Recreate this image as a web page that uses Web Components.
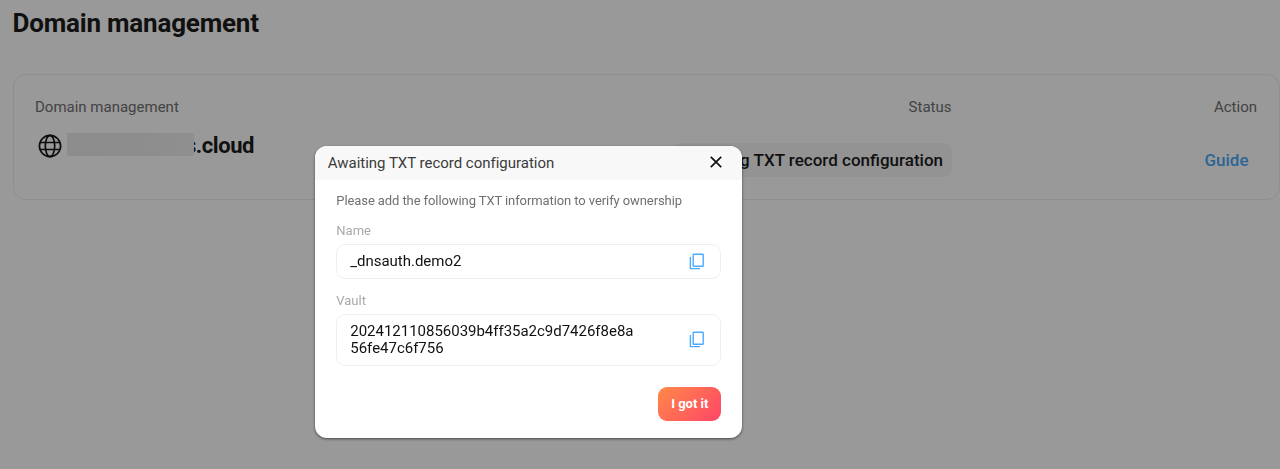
<!DOCTYPE html>
<html lang="en">
<head>
<meta charset="utf-8">
<title>Domain management</title>
<style>
html,body{margin:0;height:100%;overflow:hidden}
body{font-family:Roboto,"Liberation Sans",sans-serif;background:#fff;color:#1c1c1c}
</style>
</head>
<body>
<domain-page></domain-page>
<modal-dialog heading="Awaiting TXT record configuration">
  <copy-field label="Name">_dnsauth.demo2</copy-field>
  <copy-field label="Vault">202412110856039b4ff35a2c9d7426f8e8a<br>56fe47c6f756</copy-field>
</modal-dialog>
<script>
function define(name, html, setup) {
  const t = document.createElement('template');
  t.innerHTML = html;
  customElements.define(name, class extends HTMLElement {
    constructor() {
      super();
      this.attachShadow({mode: 'open'}).append(t.content.cloneNode(true));
    }
    connectedCallback() { if (setup) setup(this, this.shadowRoot); }
  });
}

define('globe-icon', `
<style>:host{display:block;width:24px;height:24px}svg{display:block}</style>
<svg width="24" height="24" viewBox="0 0 24 24" fill="none" stroke="#161616" stroke-width="1.7">
<circle cx="12" cy="12" r="10.6"/><ellipse cx="12" cy="12" rx="4.7" ry="10.6"/><path d="M2 8.5h20M2 15.5h20"/></svg>`);

define('copy-icon', `
<style>:host{display:block;width:16px;height:17px}svg{display:block}</style>
<svg width="16" height="17" viewBox="0 0 16 17" fill="none" stroke="#4dabff" stroke-width="1.4">
<rect x="4.2" y="1.2" width="10" height="12" rx=".5"/><path d="M1.4 4v11.6H11"/></svg>`);

define('status-pill', `
<style>:host{display:block;box-sizing:border-box;height:34px;line-height:34px;padding:0 8.5px;border-radius:8px;background:#f5f5f5;font-size:17px;font-weight:500;color:#1c1c1c;white-space:nowrap}</style><slot></slot>`);

define('domain-row', `
<style>
:host{display:grid;grid-template-columns:1fr 400px 305.5px;box-sizing:border-box;height:126px;padding:22px 22px 0 21.5px;border:1px solid #ededed;border-radius:13px;grid-template-rows:20px 1fr;font-size:15px}
.h{color:#707070;line-height:20px}
.r{text-align:right;justify-self:end}
.domain{display:flex;align-items:center;height:28px;margin:14.5px 0 0 3px;font-size:22px;font-weight:700}
.mask{position:relative;z-index:1;width:127px;height:23px;margin:-3px 0 0 5px;background:linear-gradient(90deg,#e9e9e9,#eee);flex:none}
.name{line-height:28px;letter-spacing:-.45px;margin-left:-9px}
status-pill{margin-top:26px}
a{margin:33px 8.5px 0 0;font-size:17px;font-weight:500;line-height:20px;color:#4ca9f8}
</style>
<div class="h">Domain management</div><div class="h r">Status</div><div class="h r">Action</div>
<div class="domain"><globe-icon></globe-icon><span class="mask"></span><span class="name">s.cloud</span></div>
<status-pill class="r">Awaiting TXT record configuration</status-pill>
<a class="r">Guide</a>`);

define('domain-page', `
<style>:host{display:block;isolation:isolate;padding:8px 0 0 12.5px;box-sizing:border-box}
h1{margin:0 0 36px;font-size:26px;line-height:30px;font-weight:700;letter-spacing:-.2px;color:#1c1c1c}</style>
<h1>Domain management</h1><domain-row></domain-row>`);

define('copy-field', `
<style>:host{display:block;margin-bottom:12.5px}
label{display:block;font-size:13px;line-height:18px;color:#a9a9a9;margin-bottom:4px}
.box{display:flex;align-items:center;justify-content:space-between;box-sizing:border-box;border:1px solid #efefef;border-radius:9px;padding:8.25px 15.5px 8.25px 13px;font-size:15px;letter-spacing:-.02px;line-height:17px;color:#111}</style>
<label></label><div class="box"><span><slot></slot></span><copy-icon></copy-icon></div>`,
(el, r) => r.querySelector('label').textContent = el.getAttribute('label'));

define('gradient-button', `
<style>:host{display:block;box-sizing:border-box;width:63px;height:34px;border-radius:9px;background:linear-gradient(135deg,#ff8948,#ff4568);color:#fff;font-size:13px;font-weight:700;line-height:33px;text-align:center}</style><slot></slot>`);

define('modal-dialog', `
<style>
:host{position:fixed;inset:0;z-index:1;background:rgba(0,0,0,.4);display:flex;justify-content:center;align-items:flex-start;padding:146px 222.4px 0 0;box-sizing:border-box}
section{width:427px;height:292px;border-radius:12px;background:#fff;overflow:hidden;box-shadow:0 1px 3px rgba(0,0,0,.55);display:flex;flex-direction:column}
header{display:flex;align-items:center;justify-content:space-between;height:34px;padding:0 20.5px 0 12.5px;background:#f8f8f8;font-size:15px;letter-spacing:-.02px;color:#3b3b3b;flex:none}
header span{margin-top:-1px}
header svg{margin-top:-2px}
.body{padding:12px 21px 0;display:flex;flex-direction:column}
p{margin:0 0 11.5px;font-size:13px;letter-spacing:-.09px;line-height:18px;color:#707070}
gradient-button{align-self:flex-end;margin-top:8px}
</style>
<section><header><span></span><svg width="12" height="12" viewBox="0 0 12 12" stroke="#111" stroke-width="1.7"><path d="M.8.8l10.4 10.4M11.2.8L.8 11.2"/></svg></header>
<div class="body"><p>Please add the following TXT information to verify ownership</p><slot></slot><gradient-button>I got it</gradient-button></div></section>`,
(el, r) => r.querySelector('header span').textContent = el.getAttribute('heading'));
</script>
</body>
</html>
